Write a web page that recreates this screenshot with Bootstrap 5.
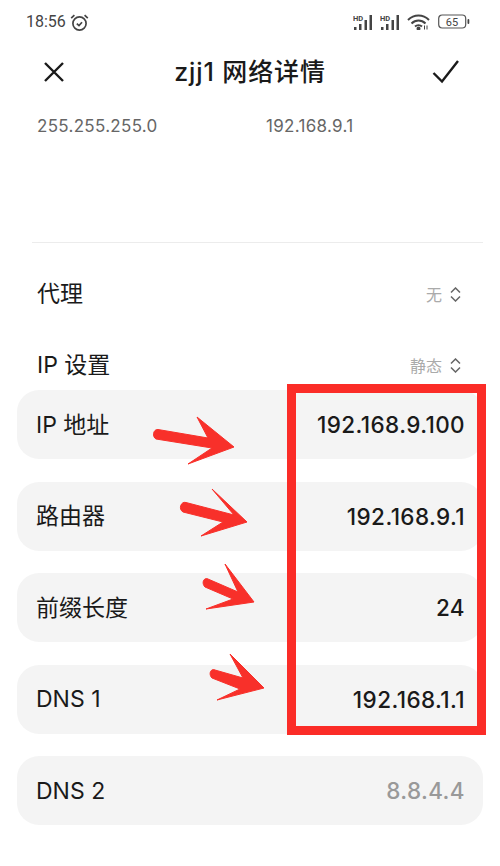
<!DOCTYPE html>
<html lang="zh-CN">
<head>
    <meta charset="UTF-8">
    <meta name="viewport" content="width=device-width, initial-scale=1.0">
    <title>zjj1 网络详情</title>
    <link href="https://cdn.jsdelivr.net/npm/bootstrap@5.3.0/dist/css/bootstrap.min.css" rel="stylesheet">
    <style>
        html, body { height: 866px; overflow: hidden; }
        body { background: #fff; color: #1a1a1a; font-family: Inter, "Noto Sans CJK SC", sans-serif; position: relative; }
        .status-bar { height: 44px; padding: 0 30px 0 26px; color: #444; font-size: 16px; }
        .status-time { font-family: Roboto, sans-serif; }
        .title-bar { height: 56px; padding: 0 40px 0 43px; }
        .title-text { font-size: 25px; font-weight: 500; line-height: 1; margin: 0 0 0 3px; letter-spacing: .9px; }
        .subnet-row { height: 54px; padding-left: 37px; color: #666; font-size: 17px; letter-spacing: .3px; }
        .subnet-row span:first-child { width: 229px; }
        .divider-line { height: 1px; background: #ececec; margin: 0 17px 0 32px; }
        .spacer-gap { height: 88px; }
        .option-list { margin-top: 26px; gap: 21px; }
        .option-row { height: 50px; padding: 1px 39px 0 37px; font-size: 23px; }
        .option-value { color: #aaa; font-size: 16px; }
        .info-list { gap: 22.5px; }
        .info-card { height: 69px; margin: 0 17px; padding: 1px 18px 0 19px; background: #f4f4f4; border-radius: 22px; font-size: 23px; }
        .info-value { font-size: 22.5px; font-weight: 450; letter-spacing: .4px; }
        .info-value.muted-value { color: #999; }
        .mark-box { position: absolute; left: 287px; top: 384px; width: 199px; height: 351px; border: 9px solid #fb2c27; }
        .arrow-layer { position: absolute; left: 0; top: 0; }
    </style>
</head>
<body>
    <!-- status bar -->
    <div class="status-bar d-flex justify-content-between align-items-center">
        <div class="d-flex align-items-center gap-1">
            <span class="status-time">18:56</span>
            <svg width="19" height="19" viewBox="0 0 19 19" fill="none" stroke="#444" stroke-width="1.7">
                <circle cx="9.500" cy="10.500" r="6.600"/>
                <path d="M6.800 10.600l2.200 2 3-3.400M1.200 5.200 4.400 2.200M17.800 5.200l-3.200-3"/>
            </svg>
        </div>
        <div class="d-flex align-items-center gap-1">
            <svg width="23" height="16" viewBox="0 0 23 16" fill="#444">
                <text x="0" y="6.500" font-size="7.500" font-weight="700" font-family="Roboto">HD</text>
                <rect x="1" y="13" width="2.500" height="3"/><rect x="6" y="10" width="2.500" height="6"/><rect x="11.500" y="6" width="2.500" height="10"/><rect x="16.500" y="1" width="2.500" height="15"/>
            </svg>
            <svg width="23" height="16" viewBox="0 0 23 16" fill="#444">
                <text x="0" y="6.500" font-size="7.500" font-weight="700" font-family="Roboto">HD</text>
                <rect x="1" y="13" width="2.500" height="3"/><rect x="6" y="10" width="2.500" height="6"/><rect x="11.500" y="6" width="2.500" height="10"/><rect x="16.500" y="1" width="2.500" height="15"/>
            </svg>
            <svg width="23" height="16" viewBox="0 0 23 16" fill="none" stroke="#444" stroke-width="2">
                <path d="M1 6c6-6 15-6 21 0M4.500 9.500c4-4 10-4 14 0M8 12.500c2-1.800 5-1.800 7 0"/>
                <circle cx="11.500" cy="14.500" r="1" fill="#444"/>
                <path d="M17.500 11.500v4M20 11.500v4" stroke-width="1"/>
            </svg>
            <svg width="32" height="16" viewBox="0 0 32 16" fill="none" class="ms-1">
                <rect x="0.700" y="1" width="27" height="13" rx="3.500" stroke="#555" stroke-width="1.200"/>
                <rect x="29.500" y="5" width="1.800" height="5" rx="0.900" fill="#444"/>
                <text x="14" y="12" font-size="11" text-anchor="middle" fill="#444" font-family="Roboto">65</text>
            </svg>
        </div>
    </div>

    <!-- title -->
    <div class="title-bar d-flex justify-content-between align-items-center">
        <svg width="22" height="22" viewBox="0 0 22 22" fill="none" stroke="#1a1a1a" stroke-width="2.400"><path d="M2 2l18 18M20 2 2 20"/></svg>
        <h1 class="title-text">zjj1 网络详情</h1>
        <svg width="28" height="24" viewBox="0 0 28 24" fill="none" stroke="#1a1a1a" stroke-width="2.400"><path d="M1.500 13l8.500 8.500L26 1"/></svg>
    </div>

    <div class="subnet-row d-flex align-items-center">
        <span>255.255.255.0</span>
        <span>192.168.9.1</span>
    </div>
    <div class="spacer-gap"></div>
    <div class="divider-line"></div>

    <!-- options -->
    <div class="option-list d-flex flex-column">
        <div class="option-row d-flex justify-content-between align-items-center">
            <span>代理</span>
            <span class="option-value d-flex align-items-center gap-2">无
                <svg width="11" height="15" viewBox="0 0 11 15" fill="none" stroke="#666" stroke-width="1.500"><path d="M1 5.500 5.500 1 10 5.500M1 9.500 5.500 14 10 9.500"/></svg>
            </span>
        </div>
        <div class="option-row d-flex justify-content-between align-items-center">
            <span>IP 设置</span>
            <span class="option-value d-flex align-items-center gap-2">静态
                <svg width="11" height="15" viewBox="0 0 11 15" fill="none" stroke="#666" stroke-width="1.500"><path d="M1 5.500 5.500 1 10 5.500M1 9.500 5.500 14 10 9.500"/></svg>
            </span>
        </div>
    </div>

    <!-- address cards -->
    <div class="info-list d-flex flex-column">
        <div class="info-card d-flex justify-content-between align-items-center">
            <span>IP 地址</span><span class="info-value">192.168.9.100</span>
        </div>
        <div class="info-card d-flex justify-content-between align-items-center">
            <span>路由器</span><span class="info-value">192.168.9.1</span>
        </div>
        <div class="info-card d-flex justify-content-between align-items-center">
            <span>前缀长度</span><span class="info-value">24</span>
        </div>
        <div class="info-card d-flex justify-content-between align-items-center">
            <span>DNS 1</span><span class="info-value">192.168.1.1</span>
        </div>
        <div class="info-card d-flex justify-content-between align-items-center">
            <span>DNS 2</span><span class="info-value muted-value">8.8.4.4</span>
        </div>
    </div>

    <!-- red annotations over the screenshot -->
    <div class="mark-box"></div>
    <svg class="arrow-layer" width="500" height="866" viewBox="0 0 500 866" fill="#f8302a" stroke="#f8302a" stroke-width="1" stroke-linejoin="round">
        <path d="M158 429.500 208 438 197 417 234 447 188 464 212 448 156 439C152 437 153 429 158 429.500Z"/>
        <path d="M186 502.500 234 515 212 489 247 522 201 536 223 522 183 512C178 509 181 501 186 502.500Z"/>
        <path d="M208 579 238 592 225 564 254 602 206 609 233 599 205 587C201 583 204 577 208 579Z"/>
        <path d="M215 670 243 678 230 654 264 688 217 700 240 689 212 678C208 674 211 668 215 670Z"/>
    </svg>

    <script src="https://cdn.jsdelivr.net/npm/bootstrap@5.3.0/dist/js/bootstrap.bundle.min.js"></script>
</body>
</html>
